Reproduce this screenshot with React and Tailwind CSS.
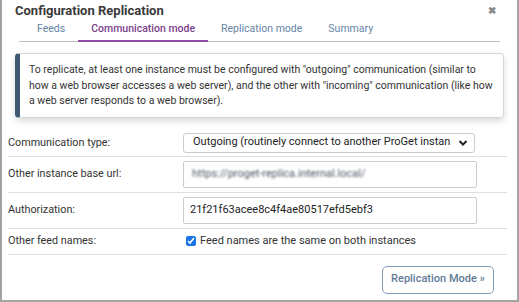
import { useState } from "react"

const tabs = ["Feeds", "Communication mode", "Replication mode", "Summary"]

function Row({ label, children, tall }) {
  return (
    <div className={`flex items-center border-b border-[#dedede] ${tall ? "h-[36px]" : "h-[26px]"}`}>
      <div className="w-[175px] shrink-0 text-[10.8px] text-[#333]">{label}</div>
      <div className="flex-1">{children}</div>
    </div>
  )
}

export default function App() {
  const [sameNames, setSameNames] = useState(true)

  return (
    <div
      className="w-[519px] h-[302px] bg-white border-x-2 border-b-2 border-[#a3a3a3] relative overflow-hidden"
      style={{ fontFamily: "Roboto, 'Liberation Sans', sans-serif" }}
    >
      {/* Header */}
      <div className="flex items-start justify-between pl-[13px] pr-[21px] pt-[1px]">
        <h1 className="text-[13px] font-bold text-[#3a3a3a] leading-[20px]">Configuration Replication</h1>
        <span className="text-[#888] text-[10px] font-bold leading-[20px]">✖</span>
      </div>

      {/* Tabs */}
      <div className="mx-[17px] mt-[-1px] flex border-b border-[#bdbdbd] h-[22px]">
        {tabs.map((t, i) => (
          <div
            key={t}
            className={`px-[13px] text-[10.5px] leading-[18px] ${
              i === 0 ? "ml-[5px]" : ""
            } ${
              i === 1
                ? "text-[#7b3f8c] border-b-2 border-[#8e4d9e] mb-[-1px] font-medium"
                : "text-[#6684a6]"
            }`}
          >
            {t}
          </div>
        ))}
      </div>

      {/* Info box */}
      <div className="mx-[13px] mt-[11px] rounded-[4px] border border-[#d6d6d6] border-l-[5px] border-l-[#3e5a72] shadow-[0_3px_6px_rgba(0,0,0,0.15)] pl-[9px] pr-[8px] pt-[8px] pb-[8px] text-[10.5px] leading-[15.5px] text-[#333]">
        To replicate, at least one instance must be configured with "outgoing" communication (similar to how a web
        browser accesses a web server), and the other with "incoming" communication (like how a web server responds to
        a web browser).
      </div>

      {/* Form */}
      <div className="ml-[6px] mr-[10px] mt-[13px]">
        <Row label="Communication type:">
          <div className="w-[292px] h-[20px] border border-[#ccc] rounded-[3px] flex items-center justify-between pl-[9px] pr-[6px] mb-[1px]">
            <span className="text-[11px] text-[#222] whitespace-nowrap overflow-hidden">
              Outgoing (routinely connect to another ProGet instan
            </span>
            <svg width="10" height="8" viewBox="0 0 10 8" className="shrink-0 ml-[4px]">
              <path d="M1.5 2 L5 5.5 L8.5 2" stroke="#222" strokeWidth="2" fill="none" />
            </svg>
          </div>
        </Row>
        <Row label="Other instance base url:" tall>
          <div className="w-[294px] h-[27px] border border-[#ccc] rounded-[2px] flex items-center pl-[8px] overflow-hidden">
            <span className="text-[11px] text-[#4b5563] blur-[1px] whitespace-nowrap select-none">
              https://proget-replica.internal.local/
            </span>
          </div>
        </Row>
        <Row label="Authorization:" tall>
          <div className="w-[294px] h-[27px] border border-[#ccc] rounded-[2px] flex items-center pl-[6px]">
            <span className="text-[11px] text-[#222]">21f21f63acee8c4f4ae80517efd5ebf3</span>
          </div>
        </Row>
        <Row label="Other feed names:">
          <label className="flex items-center gap-[4px] pl-[3px] text-[11px] text-[#333]">
            <input
              type="checkbox"
              checked={sameNames}
              onChange={(e) => setSameNames(e.target.checked)}
              className="w-[10px] h-[10px] accent-[#1a73e8] m-0"
            />
            Feed names are the same on both instances
          </label>
        </Row>
      </div>

      <div className="flex justify-end pr-[23px] mt-[11px]">
        <button className="w-[112px] h-[28px] rounded-[5px] border border-[#7f9ab5] text-[11px] font-medium text-[#5f7a97] bg-white">
          Replication Mode »
        </button>
      </div>
    </div>
  )
}
